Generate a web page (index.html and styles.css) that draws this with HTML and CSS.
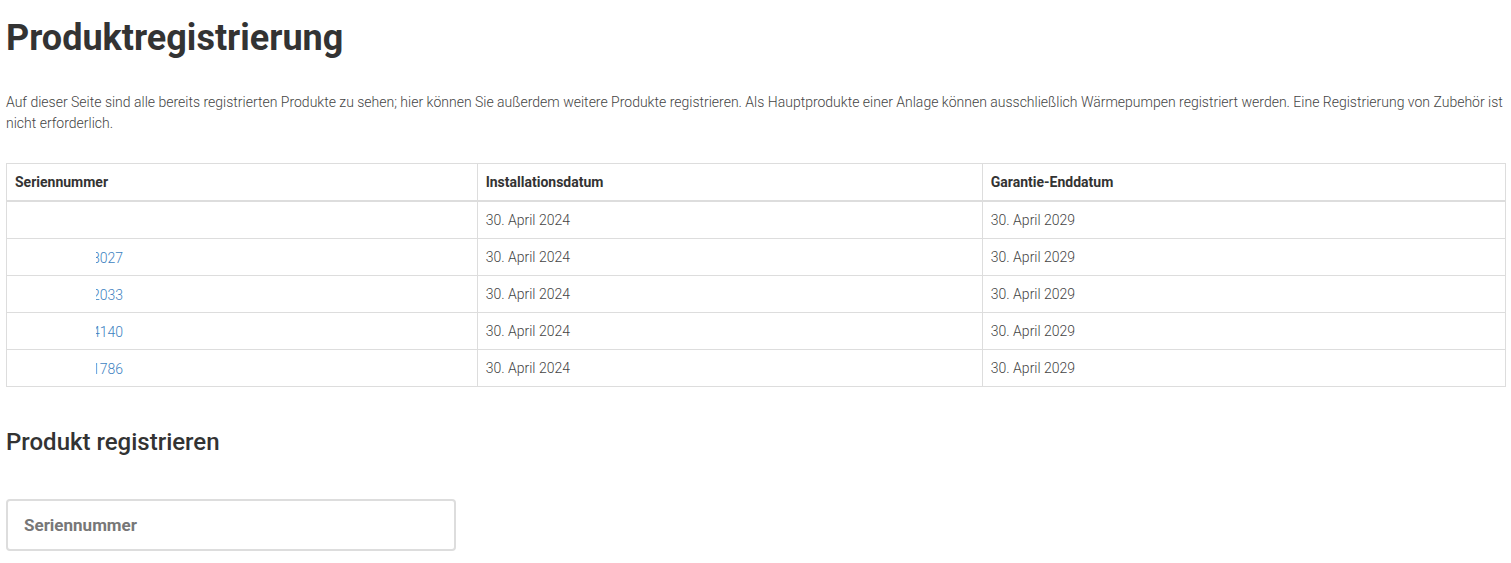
FILE: index.html
```html
<!DOCTYPE html>
<html lang="de">
<head>
<meta charset="utf-8">
<title>Produktregistrierung</title>
<link rel="stylesheet" href="styles.css">
</head>
<body>
<main class="page">
  <h1 class="title">Produktregistrierung</h1>
  <p class="intro">Auf dieser Seite sind alle bereits registrierten Produkte zu sehen; hier können Sie außerdem weitere Produkte registrieren. Als Hauptprodukte einer Anlage können ausschließlich Wärmepumpen registriert werden. Eine Registrierung von Zubehör ist nicht erforderlich.</p>
  <table class="products">
    <thead>
      <tr>
        <th class="c1">Seriennummer</th>
        <th class="c2">Installationsdatum</th>
        <th class="c3">Garantie-Enddatum</th>
      </tr>
    </thead>
    <tbody>
      <tr>
        <td></td>
        <td>30. April 2024</td>
        <td>30. April 2029</td>
      </tr>
      <tr>
        <td><span class="serial"><a href="#" class="link">8027</a></span></td>
        <td>30. April 2024</td>
        <td>30. April 2029</td>
      </tr>
      <tr>
        <td><span class="serial"><a href="#" class="link">2033</a></span></td>
        <td>30. April 2024</td>
        <td>30. April 2029</td>
      </tr>
      <tr>
        <td><span class="serial"><a href="#" class="link">4140</a></span></td>
        <td>30. April 2024</td>
        <td>30. April 2029</td>
      </tr>
      <tr>
        <td><span class="serial"><a href="#" class="link">1786</a></span></td>
        <td>30. April 2024</td>
        <td>30. April 2029</td>
      </tr>
    </tbody>
  </table>
  <h2 class="subtitle">Produkt registrieren</h2>
  <form class="reg-form">
    <input class="field" type="text" placeholder="Seriennummer">
  </form>
</main>
</body>
</html>
```

FILE: styles.css
```css
html, body {
  margin: 0;
  padding: 0;
  background: #fff;
}
body {
  font-family: Roboto, "Noto Sans", sans-serif;
  color: #333;
}
.page {
  padding: 0 5px 0 6px;
}
.title {
  margin: 0;
  padding-top: 16px;
  font-size: 36px;
  line-height: 44px;
  font-weight: 700;
  color: #333;
}
.intro {
  margin: 32px 0 0 0;
  font-size: 14px;
  line-height: 21px;
  font-weight: 300;
  color: #444;
}
.products {
  margin-top: 29px;
  width: 100%;
  border-collapse: collapse;
  border: 1px solid #ddd;
  font-size: 14px;
}
.products th,
.products td {
  border: 1px solid #ddd;
  padding: 0 8px;
  text-align: left;
  height: 36px;
}
.products th {
  font-weight: 700;
  color: #333;
  height: 36px;
  border-bottom: 2px solid #ddd;
}
.products td {
  font-weight: 300;
  color: #444;
}
.c1 { width: 31.4%; }
.c2 { width: 33.7%; }
.serial {
  display: inline-flex;
  justify-content: flex-end;
  margin-left: 81px;
  width: 27px;
  overflow: hidden;
  white-space: nowrap;
  vertical-align: middle;
}
.link {
  color: #3d7fc1;
  text-decoration: none;
  font-weight: 300;
}
.subtitle {
  margin: 41px 0 0 0;
  font-size: 24px;
  line-height: 28px;
  font-weight: 500;
  color: #333;
}
.reg-form {
  margin-top: 43px;
}
.field {
  box-sizing: border-box;
  width: 450px;
  height: 52px;
  border: 2px solid #ddd;
  border-radius: 4px;
  padding: 0 16px;
  font-family: Roboto, sans-serif;
  font-size: 17px;
  font-weight: 700;
  color: #333;
  outline: none;
}
.field::placeholder {
  color: #777;
  font-weight: 700;
}
```
